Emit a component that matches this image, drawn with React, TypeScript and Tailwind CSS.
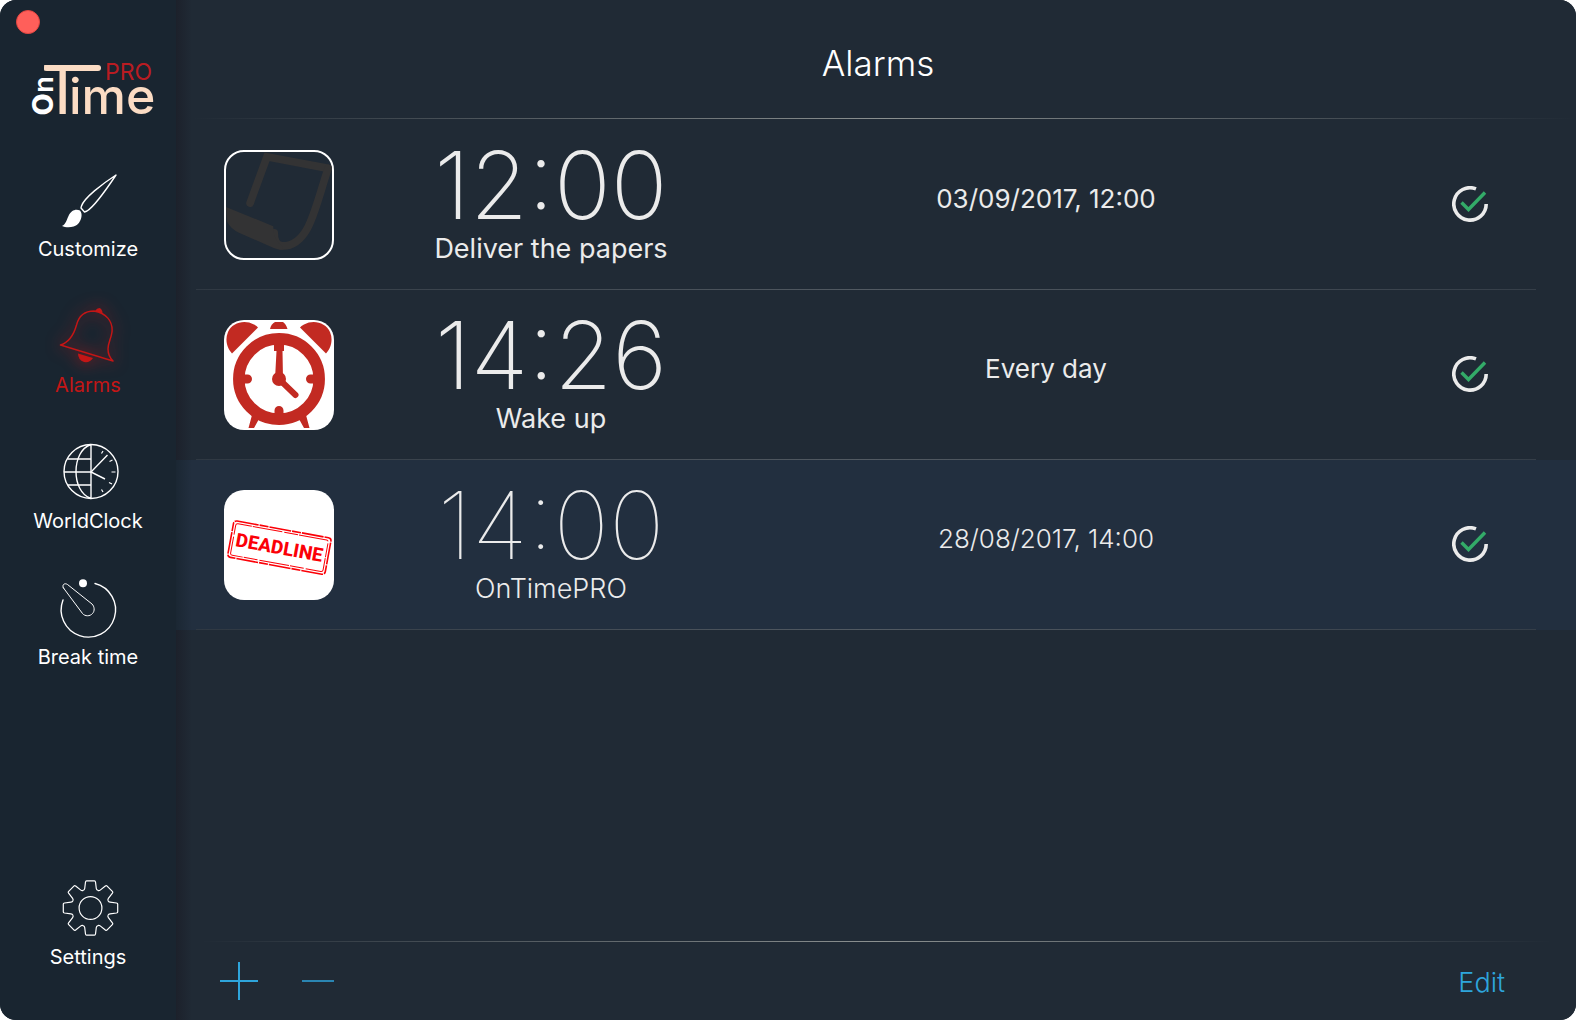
import { useState } from 'react'

const DeadlineStamp = () => (
  <svg viewBox="0 0 110 110" className="size-full">
    <rect width="110" height="110" fill="#fff" />
    <g transform="rotate(10.4 55 57)" fill="none" stroke="#fb0007">
      <rect x="6" y="39" width="99" height="37" rx="3" strokeWidth="1.6" strokeDasharray="22 1 9 1" />
      <rect x="8.5" y="41.5" width="94" height="32" rx="2" strokeWidth="1" strokeDasharray="14 1 30 2" />
      <text
        x="55.5"
        y="64"
        textAnchor="middle"
        fill="#fb0007"
        stroke="none"
        className="font-['Roboto',sans-serif] text-[19px] font-extrabold"
      >
        DEADLINE
      </text>
    </g>
  </svg>
)

const AlarmClock = () => (
  <svg viewBox="0 0 110 110" className="size-full">
    <rect width="110" height="110" fill="#fff" />
    <g fill="#c22a22">
      <path d="M8 33.5A20 20 0 0 1 4 12C8 3 20 -1 30 4.5Q33 6 34 7.5Z" />
      <path d="M102 33.5A20 20 0 0 0 106 12C102 3 90 -1 80 4.5Q77 6 76 7.5Z" />
      <path d="M46 9Q47 4 51 2H59Q62 4 63.5 9Z" />
      <path d="M28 95L35 99L30 108H24.5ZM82 95L75 99L80 108H85.5Z" />
      <circle cx="55" cy="59" r="7" />
      <path d="M50 22H60V31H58.5L59 59H51L52.5 31H50Z" />
    </g>
    <g fill="none" stroke="#c22a22" strokeLinecap="round">
      <circle cx="55" cy="59" r="40.2" strokeWidth="11.5" />
      <path d="M18 59H23.5M92 59H86.5M55 96V90.5" strokeWidth="9" />
      <path d="M57 61L71.5 75" strokeWidth="6" />
    </g>
  </svg>
)

const Paper = () => (
  <svg viewBox="0 0 110 110" className="size-full">
    <g fill="none" stroke="#333334" strokeWidth="8" strokeLinecap="round">
      <path d="M25 53L42.5 5L106 17" />
      <path d="M106 17C97 44 92 66 84 80C76 94 66 97.5 59 97.5C53 97.5 50 92 50 84" />
    </g>
    <path d="M0 57L49 77Q49 92 58 97L59 101.5Q53 101.5 46 98L14 84Q5 80 1 72Z" fill="#333334" />
  </svg>
)

const Brush = () => (
  <svg viewBox="0 0 64 64" className="size-16" fill="none" stroke="#fff" strokeWidth="1.4" strokeLinejoin="round">
    <path d="M60 4C46 13 28 27 25.5 35L25 37L28.5 41L31 40C39 35 50 19 60 4Z" />
    <path d="M6 55C10 53 10.5 49 12.500 45C15 39 20 37.5 24 39.5C27 43 25.5 49 22 53C18 57 10 57 6 55Z" fill="#fff" stroke="none" />
  </svg>
)

const Bell = () => (
  <svg
    viewBox="0 0 64 64"
    className="size-16 overflow-visible drop-shadow-[0_0_8px_#c41616]"
    fill="none"
    stroke="#c41616"
    strokeWidth="1.5"
    strokeLinejoin="round"
  >
    <path d="M4.5 38C14 35 18 27 20.5 18C23 8 30 4 38 4C50 6 57 14 56 25C55 32 52 36 52 42C52 47 54 51 57 54Z" />
    <path d="M39 4Q41 1 43.5 1Q46.5 2 46.5 6.5Z" fill="#c41616" stroke="none" />
    <path d="M22 46.5L37 51Q34 56 28 55Q22 53 22 46.5Z" fill="#c41616" stroke="none" />
  </svg>
)

const WorldClock = () => (
  <svg viewBox="0 0 64 64" className="size-16" fill="none" stroke="#fff" strokeWidth="1.4">
    <circle cx="35" cy="28.5" r="27" />
    <path d="M35 1.5V55.5M35 1.5C15 8 15 49 35 55.5" />
    <path d="M11.5 16H35M8 29H35M11.5 42H35" strokeWidth="1.7" />
    <path d="M51.5 12L35 29L49 36" />
    <path d="M47 8L45.5 10.5M56.5 17L53.5 18.5M59.5 29H55.5M56 41L53 39.5M47 49L45.5 46.5" strokeWidth="1.2" />
  </svg>
)

const Timer = () => (
  <svg viewBox="0 0 64 64" className="size-16" fill="none" stroke="#fff" strokeWidth="1.4" strokeLinecap="round">
    <path d="M39 4.5A27.2 27.2 0 1 1 7 21" />
    <circle cx="27" cy="4.3" r="4" fill="#fff" stroke="none" />
    <path d="M7.5 9L26.5 34.5C29 37.5 34 37.5 36.5 34.5C39 32 38.5 27.5 36 25L11.5 5.5C8.5 3.5 5.5 6 7.5 9Z" strokeWidth="1" />
  </svg>
)

const Gear = () => (
  <svg viewBox="0 0 64 64" className="size-16" fill="none" stroke="#fff" strokeWidth="1.2" strokeLinejoin="round">
    <g transform="translate(34.5 29)">
      <circle r="11.4" />
      {[0, 45, 90, 135, 180, 225, 270, 315].map(angle => (
        <path
          key={angle}
          transform={`rotate(${angle})`}
          d="M-7.3 -17.6Q-6 -18.1 -5.8 -19.5L-5 -26Q-4.8 -27.2 -4 -27.2H4Q4.8 -27.2 5 -26L5.8 -19.5Q6 -18.1 7.3 -17.6"
        />
      ))}
    </g>
  </svg>
)

const Logo = () => (
  <svg viewBox="0 0 128 56" className="h-14 w-32 overflow-visible" aria-label="onTime PRO">
    <g className="font-['Inter',sans-serif]">
      <text transform="translate(23 54) rotate(-90)" fill="#fff" className="text-[38px] font-semibold">
        o<tspan className="text-[27px]">n</tspan>
      </text>
      <rect x="14" y="3" width="57" height="6" rx="3" fill="#fbdcc4" />
      <text x="11" y="52" fill="#fbdcc4" className="text-[67px] font-normal">T</text>
      <text x="39" y="52" fill="#fbdcc4" className="text-[50px] font-medium">ime</text>
      <text x="75" y="18" fill="#b91c22" className="text-[23px] font-normal">PRO</text>
    </g>
  </svg>
)

const sections = [
  { name: 'Customize', Icon: Brush },
  { name: 'Alarms', Icon: Bell },
  { name: 'WorldClock', Icon: WorldClock },
  { name: 'Break time', Icon: Timer },
]

const alarms = [
  { time: '12:00', label: 'Deliver the papers', date: '03/09/2017, 12:00', Picture: Paper, outlined: true },
  { time: '14:26', label: 'Wake up', date: 'Every day', Picture: AlarmClock, outlined: false },
  { time: '14:00', label: 'OnTimePRO', date: '28/08/2017, 14:00', Picture: DeadlineStamp, outlined: false },
]

function Toggle({ label }: { label: string }) {
  const [on, setOn] = useState(true)
  return (
    <label className="grid size-9 cursor-pointer">
      <input
        type="checkbox"
        aria-label={label}
        checked={on}
        onChange={() => setOn(!on)}
        className="col-start-1 row-start-1 size-9 appearance-none"
      />
      <svg viewBox="0 0 36 36" className="pointer-events-none col-start-1 row-start-1 size-9" fill="none">
        <path d="M24 2.9A16.2 16.2 0 1 0 34.2 18" stroke="#ebebeb" strokeWidth="3.6" />
        {on && <path d="M9.5 16.5L16.5 23.5L33 6.5" stroke="#33ab68" strokeWidth="3.4" />}
      </svg>
    </label>
  )
}

export default function App() {
  const [section, setSection] = useState('Alarms')
  const [selected, setSelected] = useState(2)

  return (
    <div className="flex min-h-screen overflow-hidden rounded-2xl bg-[#202a35] font-['Inter',sans-serif] text-[#ebebeb]">
      <aside className="flex w-44 shrink-0 flex-col bg-[#192530] pt-2.5 pb-[49px]">
        <button aria-label="Close" className="ml-4 size-6 rounded-full border border-[#e24640] bg-[#ff5f5a]" />
        <div className="mt-7 ml-[30px]">
          <Logo />
        </div>
        <nav className="mt-[53px] flex grow flex-col items-center gap-11 text-xl leading-7 text-white">
          {sections.map(({ name, Icon }) => (
            <button
              key={name}
              onClick={() => setSection(name)}
              className={`flex flex-col items-center ${name === section ? 'text-[#c41616]' : ''}`}
            >
              <Icon />
              {name}
            </button>
          ))}
          <button className="mt-auto flex flex-col items-center">
            <Gear />
            Settings
          </button>
        </nav>
      </aside>

      <main className="flex grow flex-col bg-[linear-gradient(to_right,#1c212b,#202a35_16px)]">
        <header className="flex h-30 flex-col pb-px">
          <h1 className="grow pt-[39px] pl-1 text-center text-[35px] leading-12 font-light text-white">Alarms</h1>
          <div className="ml-4 h-px bg-linear-to-r from-transparent via-[#8b9090] to-transparent" />
        </header>

        <ul className="grow">
          {alarms.map(({ time, label, date, Picture, outlined }, i) => (
            <li
              key={time}
              onClick={() => setSelected(i)}
              className={i === selected ? 'bg-[linear-gradient(to_right,#1b2733,#222f3f_16px)]' : ''}
            >
              <div className="grid h-[169px] grid-cols-[110px_434fr_556fr_164fr] items-center pr-22 pl-12">
                <div className={`size-[110px] overflow-hidden rounded-[20px] ${outlined ? 'border-2 border-white' : ''}`}>
                  <Picture />
                </div>
                <div className="pb-2 text-center">
                  <div className={`text-[94px] leading-24 ${i === selected ? 'font-thin' : 'font-extralight'}`}>{time}</div>
                  <div className={`text-[27px] leading-8 ${i === selected ? 'font-light' : 'font-normal'}`}>{label}</div>
                </div>
                <div className={`pb-3 text-center text-[26px] leading-8 ${i === selected ? 'font-light' : 'font-normal'}`}>
                  {date}
                </div>
                <div className="flex justify-end pb-0.5">
                  <Toggle label={`${label} on`} />
                </div>
              </div>
              <div className="mr-10 ml-5 h-px bg-linear-to-r from-[#2f3842] via-[#525a62] to-[#353e48]" />
            </li>
          ))}
        </ul>

        <footer>
          <div className="mx-6 h-px bg-linear-to-r from-transparent via-[#8b9090] to-transparent" />
          <div className="flex h-[78px] items-center pr-[71px] pl-11 text-[#2ea5dc]">
            <button aria-label="Add alarm">
              <svg viewBox="0 0 38 38" className="size-[38px]" stroke="currentColor" strokeWidth="2">
                <path d="M19 0V38M0 19H38" />
              </svg>
            </button>
            <button aria-label="Remove alarm" className="ml-11">
              <svg viewBox="0 0 32 38" className="h-[38px] w-8" stroke="currentColor" strokeWidth="1.5">
                <path d="M0 19H32" />
              </svg>
            </button>
            <button className="ml-auto pt-1 text-[27px] leading-8 font-light">Edit</button>
          </div>
        </footer>
      </main>
    </div>
  )
}
